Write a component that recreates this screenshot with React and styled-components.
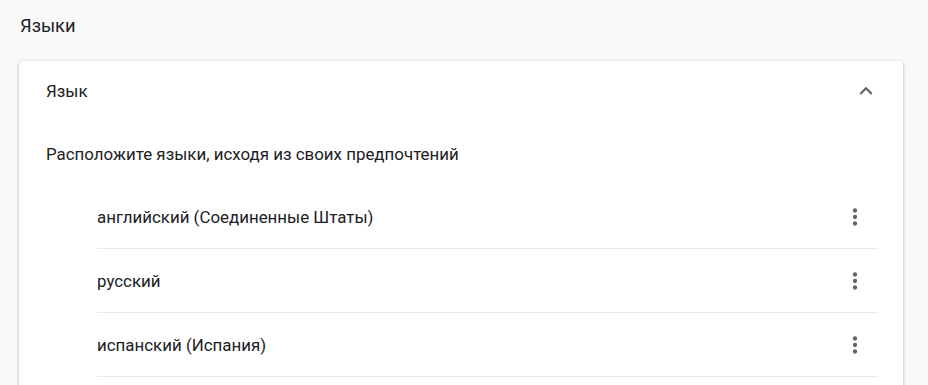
import React from 'react'
import styled, { createGlobalStyle } from 'styled-components'

const GlobalStyle = createGlobalStyle`
  html, body {
    margin: 0;
    background: #f8f9fa;
    font-family: Roboto, "Liberation Sans", sans-serif;
    color: #202124;
  }
`

const Page = styled.div`
  box-sizing: border-box;
  width: 928px;
  height: 385px;
  overflow: hidden;
  padding: 14px 0 0 19px;
`

const Title = styled.h2`
  margin: 0 0 23px 1px;
  font-size: 18.3px;
  font-weight: 400;
  line-height: 24px;
`

const Card = styled.section`
  width: 884px;
  background: #fff;
  border-radius: 4px;
  box-shadow: 0 1px 2px rgba(60, 64, 67, 0.3), 0 1px 3px 1px rgba(60, 64, 67, 0.15);
  padding-bottom: 20px;
`

const CardHeader = styled.div`
  display: flex;
  align-items: center;
  justify-content: space-between;
  height: 60px;
  padding: 0 17px 0 27px;
  font-size: 16.9px;
`

const IconButton = styled.button`
  display: flex;
  align-items: center;
  justify-content: center;
  width: 40px;
  height: 40px;
  padding: 0;
  border: 0;
  background: none;
  color: #5f6368;
  cursor: pointer;
`

const Description = styled.div`
  padding: 21px 27px 0;
  font-size: 16.9px;
  line-height: 24px;
`

const List = styled.ul`
  list-style: none;
  margin: 19px 25px 0 78px;
  padding: 0;
`

const Row = styled.li`
  display: flex;
  align-items: center;
  justify-content: space-between;
  height: 63px;
  border-bottom: 1px solid #e8eaed;
  font-size: 16.9px;
  padding-right: 3px;
`

const ChevronUp = () => (
  <svg width="26" height="26" viewBox="0 0 24 24" fill="currentColor">
    <path d="M12 8l-6 6 1.41 1.41L12 10.83l4.59 4.58L18 14z" />
  </svg>
)

const MoreVert = () => (
  <svg width="26" height="26" viewBox="0 0 24 24" fill="currentColor">
    <circle cx="12" cy="6" r="2" />
    <circle cx="12" cy="12" r="2" />
    <circle cx="12" cy="18" r="2" />
  </svg>
)

const languages = ['английский (Соединенные Штаты)', 'русский', 'испанский (Испания)']

export default function App() {
  return (
    <Page>
      <GlobalStyle />
      <Title>Языки</Title>
      <Card>
        <CardHeader>
          <span>Язык</span>
          <IconButton aria-label="Свернуть">
            <ChevronUp />
          </IconButton>
        </CardHeader>
        <Description>Расположите языки, исходя из своих предпочтений</Description>
        <List>
          {languages.map(lang => (
            <Row key={lang}>
              <span>{lang}</span>
              <IconButton aria-label="Ещё">
                <MoreVert />
              </IconButton>
            </Row>
          ))}
        </List>
      </Card>
    </Page>
  )
}
